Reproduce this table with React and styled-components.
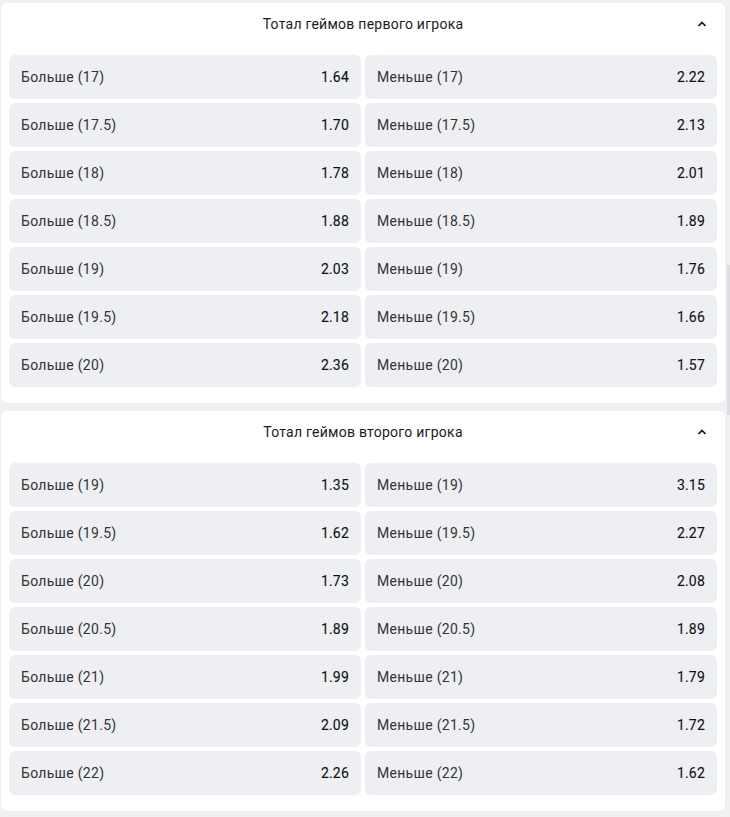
import React from "react";
import styled, { createGlobalStyle } from "styled-components";

const GlobalStyle = createGlobalStyle`
  html, body {
    margin: 0;
    padding: 0;
    background: #eff0f2;
    font-family: Roboto, "Noto Sans", Arial, sans-serif;
  }
`;

const Page = styled.div`
  display: flex;
  flex-direction: column;
  gap: 8px;
  padding: 3px 5px 6px 1px;
`;

const Card = styled.section`
  background: #fff;
  border-radius: 6px;
  padding: 0 8px 16px;
`;

const Header = styled.div`
  position: relative;
  display: flex;
  align-items: center;
  justify-content: center;
  height: 41px;
  margin-bottom: 11px;
  font-size: 14px;
  color: #1c1c1c;
  letter-spacing: 0.25px;
`;

const Chevron = styled.svg`
  position: absolute;
  right: 10px;
  top: 17px;
  width: 10px;
  height: 8px;
`;

const Grid = styled.div`
  display: grid;
  grid-template-columns: 1fr 1fr;
  gap: 4px;
`;

const Cell = styled.div`
  display: flex;
  align-items: center;
  justify-content: space-between;
  height: 44px;
  padding: 0 12px 1px;
  box-sizing: border-box;
  background: #eeeff2;
  border-radius: 6px;
  font-size: 14px;
  line-height: 16px;
`;

const Label = styled.span`
  color: #333;
  letter-spacing: 0.3px;
`;

const Odd = styled.span`
  color: #111;
  font-weight: 400;
  letter-spacing: 0.2px;
  -webkit-text-stroke: 0.12px #111;
`;

const ScrollThumb = styled.div`
  position: fixed;
  right: 0;
  top: 265px;
  width: 3px;
  height: 150px;
  background: #dcdde0;
`;

const markets = [
  {
    title: "Тотал геймов первого игрока",
    rows: [
      ["17", "1.64", "2.22"],
      ["17.5", "1.70", "2.13"],
      ["18", "1.78", "2.01"],
      ["18.5", "1.88", "1.89"],
      ["19", "2.03", "1.76"],
      ["19.5", "2.18", "1.66"],
      ["20", "2.36", "1.57"],
    ],
  },
  {
    title: "Тотал геймов второго игрока",
    rows: [
      ["19", "1.35", "3.15"],
      ["19.5", "1.62", "2.27"],
      ["20", "1.73", "2.08"],
      ["20.5", "1.89", "1.89"],
      ["21", "1.99", "1.79"],
      ["21.5", "2.09", "1.72"],
      ["22", "2.26", "1.62"],
    ],
  },
];

const Market = ({ title, rows }) => (
  <Card>
    <Header>
      {title}
      <Chevron viewBox="0 0 10 8">
        <path d="M1.5 6 L5 2.5 L8.5 6" fill="none" stroke="#111" strokeWidth="1.6" />
      </Chevron>
    </Header>
    <Grid>
      {rows.map(([total, over, under]) => (
        <React.Fragment key={total}>
          <Cell>
            <Label>Больше ({total})</Label>
            <Odd>{over}</Odd>
          </Cell>
          <Cell>
            <Label>Меньше ({total})</Label>
            <Odd>{under}</Odd>
          </Cell>
        </React.Fragment>
      ))}
    </Grid>
  </Card>
);

export default function App() {
  return (
    <>
      <GlobalStyle />
      <Page>
        {markets.map((m) => (
          <Market key={m.title} {...m} />
        ))}
      </Page>
      <ScrollThumb />
    </>
  );
}
